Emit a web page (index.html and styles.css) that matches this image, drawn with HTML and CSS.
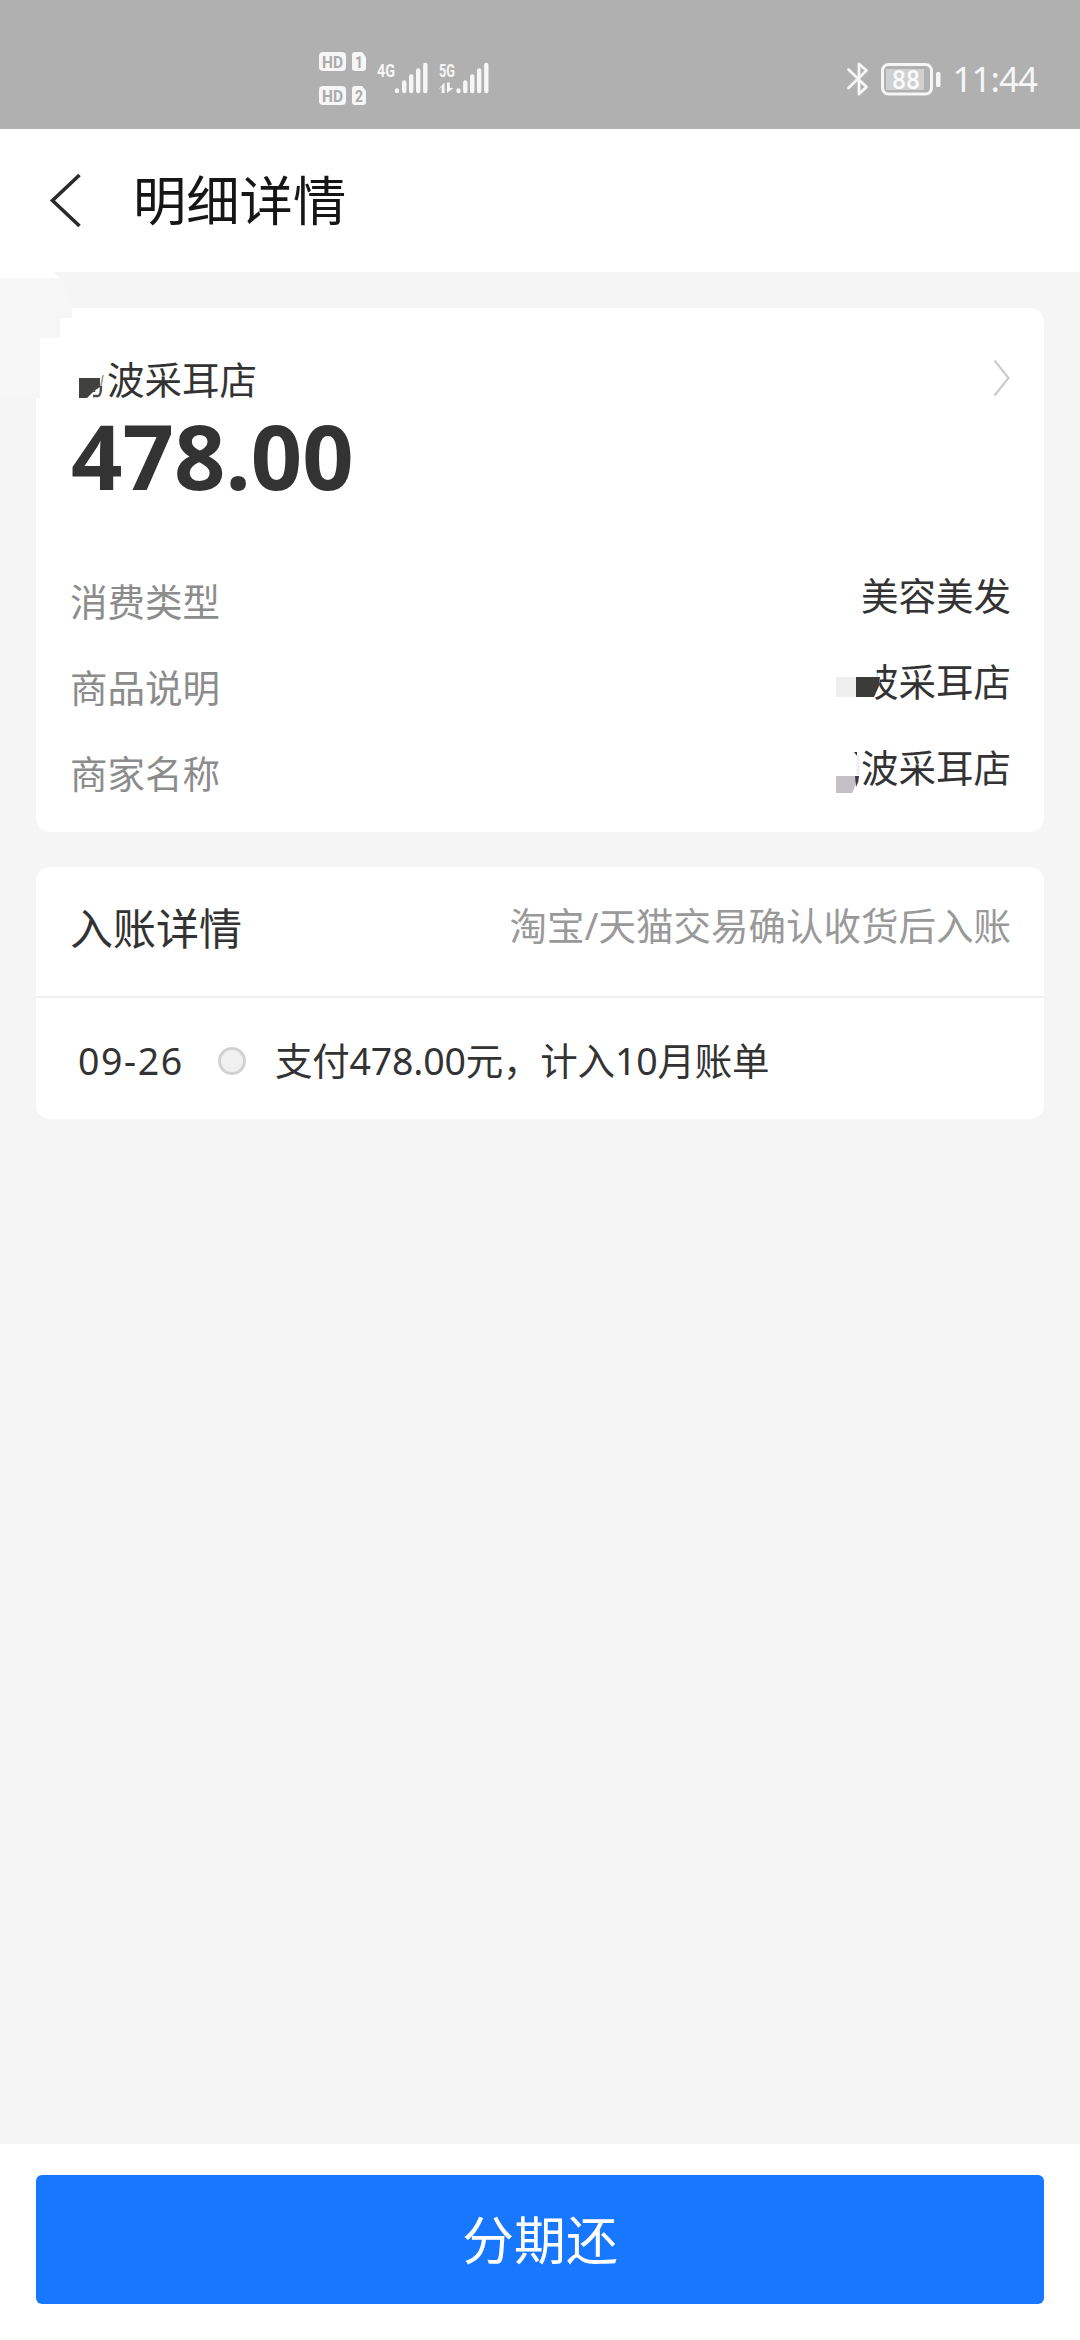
FILE: index.html
```html
<!DOCTYPE html>
<html lang="zh-CN">
<head>
<meta charset="utf-8">
<title>明细详情</title>
<link rel="stylesheet" href="styles.css">
</head>
<body>
<div class="screen">
  <div class="status">
    <svg class="status-signal" width="180" height="64" viewBox="316 48 180 64">
      <g fill="#f6f6f6">
        <rect x="319" y="52" width="27" height="19" rx="4"/>
        <path d="M352 55q0-3 3-3h7l4 5v11q0 3-3 3h-8q-3 0-3-3z"/>
        <rect x="319" y="86" width="27" height="19" rx="4"/>
        <path d="M352 89q0-3 3-3h7l4 5v11q0 3-3 3h-8q-3 0-3-3z"/>
      </g>
      <g class="cut">
        <text x="322" y="67.500" textLength="21" lengthAdjust="spacingAndGlyphs">HD</text>
        <text x="355" y="67.500" textLength="8" lengthAdjust="spacingAndGlyphs">1</text>
        <text x="322" y="101.500" textLength="21" lengthAdjust="spacingAndGlyphs">HD</text>
        <text x="355" y="101.500" textLength="8" lengthAdjust="spacingAndGlyphs">2</text>
      </g>
      <g class="net">
        <text x="377" y="76.500" textLength="18" lengthAdjust="spacingAndGlyphs">4G</text>
        <text x="439" y="76.500" textLength="16" lengthAdjust="spacingAndGlyphs">5G</text>
      </g>
      <g stroke="#f6f6f6" stroke-width="4.400" stroke-linecap="round">
        <path d="M397 90.500v.5M404.200 82.500V91M411.200 76.500V91M418.200 70.500V91M425.300 65V91"/>
        <path d="M458.500 90.500v.5M465.300 82.500V91M472.200 76.500V91M479.200 70.500V91M486.300 65V91"/>
      </g>
      <path d="M438.500 89.500l6-7V93h-2.800v-6zM447 82.500h2.800V88h3.700l-6.500 5z" fill="#f6f6f6"/>
    </svg>
    <div class="status-right">
      <svg width="26" height="36" viewBox="844 60 26 36">
        <path d="M846.500 68.500L864.500 86l-7.500 7V63l7.500 6.500L846.500 87" fill="none" stroke="#f6f6f6" stroke-width="2.800" stroke-linejoin="round" stroke-linecap="round"/>
      </svg>
      <svg class="battery" width="62" height="34" viewBox="879 61 62 34">
        <rect x="881.500" y="63.500" width="49" height="29.500" rx="6" fill="none" stroke="#f6f6f6" stroke-width="3"/>
        <rect x="885" y="68" width="38" height="21" fill="#d0d0d0"/>
        <rect x="935" y="71" width="4.500" height="15" rx="1.500" fill="#f6f6f6"/>
        <text class="level" x="891" y="88" textLength="28" lengthAdjust="spacingAndGlyphs">88</text>
      </svg>
      <span class="time">11:44</span>
    </div>
  </div>

  <header class="header">
    <svg class="back" width="32" height="56" viewBox="49 172 32 56">
      <path d="M79.500 175L52.500 200.500L79.500 226" fill="none" stroke="#2b2b2b" stroke-width="3.600"/>
    </svg>
    <h1 class="title">明细详情</h1>
    <svg class="smudge" width="76" height="140" viewBox="0 268 76 140">
      <path d="M0 268h50l10 10.500H0z" fill="#fff"/>
      <path d="M0 278.500h60q9 14 12 30V318H60v20H40v60H0z" fill="#f6f6f6"/>
    </svg>
  </header>

  <main class="content">
    <section class="card summary">
      <div class="shop">
        <span class="shop-name">波采耳店</span>
        <svg class="mask-name" width="26" height="24" viewBox="79 375 26 24">
          <path d="M79 378h21v9l-6 4-7 7h-8z" fill="#41423f"/>
          <path d="M101 386q0 10-3 10h-5M94 388v4" fill="none" stroke="#4a4a4a" stroke-width="2.400"/>
          <path d="M103 375l-2 11" stroke="#999" stroke-width="1.500"/>
        </svg>
        <svg class="arrow" width="18" height="40" viewBox="993 358 18 40">
          <path d="M994.500 360.500L1008.500 378L994.500 395.500" fill="none" stroke="#ccc" stroke-width="2.200"/>
        </svg>
      </div>
      <div class="amount">478.00</div>
      <div class="rows">
        <div class="row"><span class="label">消费类型</span><span class="value">美容美发</span></div>
        <div class="row"><span class="label">商品说明</span><span class="value">波采耳店
          <svg class="mask" width="48" height="52" viewBox="832 654 48 52">
            <path d="M855 654h20l1 22h4l-6 20-3 10h-16z" fill="#fff"/>
            <rect x="835" y="676" width="20" height="20" fill="#efefef"/>
            <path d="M855 676h24l-1 9-5 11h-18z" fill="#3b3c3a"/>
          </svg></span></div>
        <div class="row"><span class="label">商家名称</span><span class="value">波采耳店
          <svg class="mask" width="48" height="52" viewBox="832 741 48 52">
            <path d="M853 752h3v4z" fill="#333"/>
            <path d="M857 755v20" stroke="#eee" stroke-width="3"/>
            <path d="M835 776h21q-1 10-6 20h-15z" fill="#c4c1c6"/>
            <path d="M854 776h4q0 6-3 11z" fill="#3b3b3d"/>
          </svg></span></div>
      </div>
    </section>

    <section class="card posting">
      <div class="posting-head">
        <h2 class="posting-title">入账详情</h2>
        <span class="posting-note">淘宝/天猫交易确认收货后入账</span>
      </div>
      <div class="posting-item">
        <span class="date">09-26</span>
        <span class="dot"></span>
        <span class="desc">支付478.00元，计入10月账单</span>
      </div>
    </section>
  </main>

  <footer class="footer">
    <button class="pay" type="button">分期还</button>
  </footer>
</div>
</body>
</html>
```
FILE: styles.css
```css
* { box-sizing: border-box; }

body {
  margin: 0;
  font-family: "Noto Sans", "Noto Sans CJK SC", sans-serif;
  color: #333;
  background: #f5f5f5;
}

.screen {
  display: flex;
  flex-direction: column;
  width: 1080px;
  height: 2340px;
  overflow: hidden;
}

.status {
  display: flex;
  justify-content: space-between;
  height: 129px;
  padding: 48px 43px 0 316px;
  background: #b0b0b0;
}

.cut text {
  font: 700 17px "Roboto", sans-serif;
  fill: #aaa;
}

.net text {
  font: 700 19px "Roboto", sans-serif;
  fill: #f6f6f6;
}

.status-right {
  display: flex;
  align-items: center;
  height: 62px;
}

.battery { margin-left: 8px; }

.level {
  font: 500 26px "Roboto", sans-serif;
  fill: #fafafa;
}

.time {
  margin-left: 11px;
  font-size: 35px;
  line-height: 60px;
  letter-spacing: -1px;
  color: #f6f6f6;
}

.header {
  position: relative;
  display: flex;
  align-items: center;
  gap: 52px;
  height: 143px;
  padding: 0 0 2px 49px;
  background: #fff;
}

.title {
  margin: 0;
  padding-bottom: 4px;
  font: 400 53.300px/80px "Noto Sans CJK SC", sans-serif;
  color: #161616;
}

.smudge {
  position: absolute;
  left: 0;
  top: 139px;
  z-index: 1;
}

.content {
  flex: 1;
  padding: 36px 36px 0;
}

.card {
  border-radius: 14px;
  background: #fff;
}

.summary {
  height: 524px;
  padding: 40px 33px 0 34px;
}

.shop {
  position: relative;
  display: flex;
  align-items: center;
  justify-content: space-between;
  height: 60px;
  padding-left: 37px;
  font: 37.500px/60px "Noto Sans CJK SC", sans-serif;
}

.mask-name {
  position: absolute;
  left: 9px;
  top: 27px;
}

.amount {
  margin-top: 7px;
  padding-left: 1px;
  font-size: 90px;
  font-weight: 700;
  line-height: 80px;
}

.rows { margin-top: 74px; }

.row {
  display: flex;
  align-items: flex-start;
  justify-content: space-between;
  height: 86px;
  font: 37.500px/50px "Noto Sans CJK SC", sans-serif;
}

.label {
  padding-top: 6px;
  color: #8c8c8c;
}

.value { position: relative; }

.mask {
  position: absolute;
  left: -28px;
  top: 0;
}

.posting {
  height: 252px;
  margin-top: 35px;
}

.posting-head {
  display: flex;
  align-items: center;
  justify-content: space-between;
  height: 131px;
  padding: 0 33px 12px 34px;
  border-bottom: 2px solid #f0f0f0;
}

.posting-title {
  margin: 0;
  font: 400 43px/58px "Noto Sans CJK SC", sans-serif;
}

.posting-note {
  font-size: 37.500px;
  line-height: 60px;
  color: #999;
}

.posting-item {
  display: flex;
  align-items: center;
  height: 121px;
  padding: 4px 0 0 42px;
  font-size: 37.500px;
  line-height: 60px;
}

.date {
  width: 105px;
  letter-spacing: 1.600px;
  white-space: nowrap;
}

.dot {
  width: 28px;
  height: 28px;
  margin-left: 35px;
  border: 3px solid #d2d2d2;
  border-radius: 50%;
  background: #f0f0f0;
}

.desc {
  margin-left: 29px;
  letter-spacing: -0.200px;
}

.footer {
  height: 196px;
  padding: 31px 36px 0;
  background: #fff;
}

.pay {
  display: block;
  width: 100%;
  height: 129px;
  padding: 0 0 3px;
  border: 0;
  border-radius: 6px;
  background: #1777ff;
  color: #fff;
  font: 400 51.800px/126px "Noto Sans CJK SC", sans-serif;
}
```
